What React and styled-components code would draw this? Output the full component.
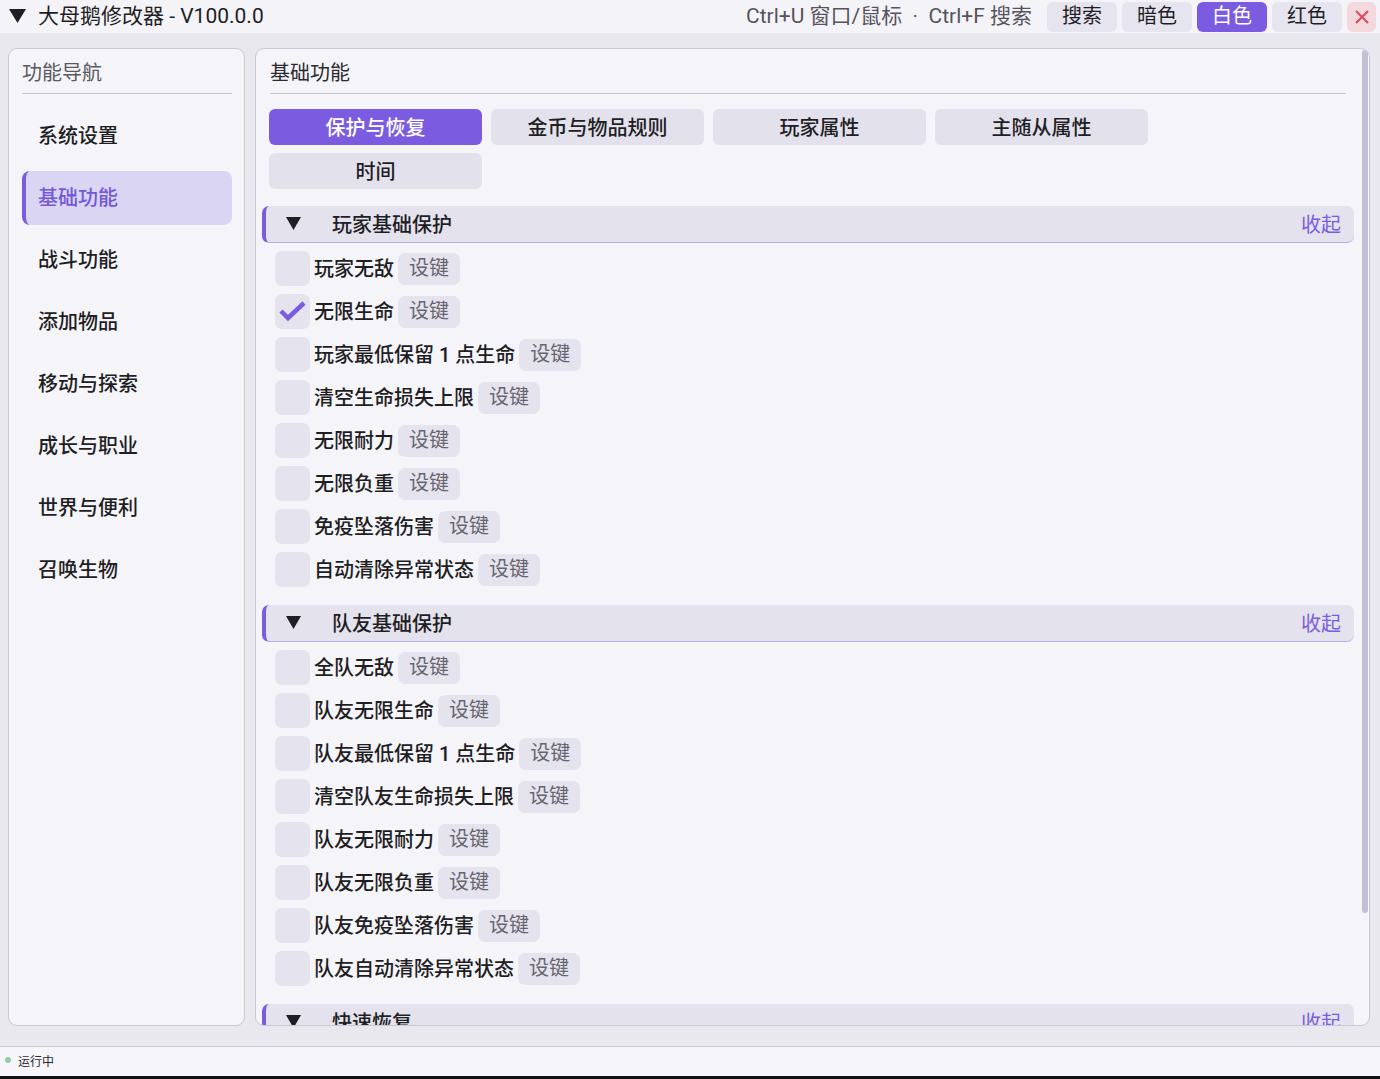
import styled, { createGlobalStyle } from 'styled-components';

const GlobalStyle = createGlobalStyle`
  html, body {
    margin: 0;
    padding: 0;
  }
  body {
    font-family: Roboto, "Noto Sans CJK SC", sans-serif;
    background: #000;
    color: #1e1e24;
  }
  * {
    box-sizing: border-box;
  }
`;

const PURPLE = '#7b5ce0';

const Shell = styled.div`
  height: 1079px;
  display: flex;
  flex-direction: column;
  background: #e9e8ef;
  overflow: hidden;
`;

const TopBar = styled.div`
  height: 33px;
  flex: none;
  display: flex;
  align-items: center;
  padding: 0 4px 0 9px;
  background: #f4f3f7;
`;

const AppTitle = styled.div`
  display: flex;
  align-items: center;
  gap: 12px;
  font-size: 21px;
  line-height: 30px;
  padding-bottom: 2px;
  color: #1e1e24;
`;

const Hint = styled.div`
  margin-left: auto;
  margin-right: 15px;
  font-size: 21px;
  line-height: 30px;
  padding-bottom: 2px;
  color: #55545c;
  white-space: pre;
`;

const BarButtons = styled.div`
  display: flex;
  gap: 5px;
`;

const BarButton = styled.button`
  height: 30px;
  padding: 0 15px 2px;
  border: none;
  border-radius: 6px;
  font-family: inherit;
  font-size: 20px;
  line-height: 28px;
  background: ${p => (p.$active ? PURPLE : '#e6e4ee')};
  color: ${p => (p.$active ? '#fff' : '#1e1e24')};
`;

const CloseButton = styled.button`
  width: 29px;
  height: 30px;
  padding: 0;
  border: none;
  border-radius: 6px;
  background: #f3d9de;
  display: flex;
  align-items: center;
  justify-content: center;
`;

const Main = styled.div`
  flex: 1;
  min-height: 0;
  display: flex;
  gap: 10px;
  padding: 15px 10px 20px 8px;
`;

const Panel = styled.div`
  background: #f5f4f8;
  border: 1px solid #cac8d4;
  border-radius: 9px;
  overflow: hidden;
`;

const NavPanel = styled(Panel)`
  width: 237px;
  flex: none;
  padding: 0 12px 0 13px;
`;

const PanelTitle = styled.div`
  padding: 11px 0 7px;
  line-height: 26px;
  font-size: 20px;
  color: ${p => (p.$muted ? '#5a5962' : '#2a2a30')};
  border-bottom: 1px solid #c6c4d0;
`;

const NavList = styled.div`
  margin-top: 15px;
  display: flex;
  flex-direction: column;
  gap: 8px;
`;

const NavItem = styled.div`
  height: 54px;
  display: flex;
  align-items: center;
  padding-left: ${p => (p.$active ? '12px' : '16px')};
  padding-bottom: 3px;
  border-radius: 8px;
  font-size: 20px;
  font-weight: 500;
  color: ${p => (p.$active ? '#7458d8' : '#1e1e24')};
  background: ${p => (p.$active ? '#dbd5f4' : 'transparent')};
  border-left: ${p => (p.$active ? `4px solid ${PURPLE}` : 'none')};
`;

const ContentPanel = styled(Panel)`
  flex: 1;
  position: relative;
`;

const Scroll = styled.div`
  height: 100%;
  overflow: hidden;
  padding: 0 15px 0 6px;
`;

const ContentTitle = styled(PanelTitle)`
  margin: 0 8px 0 8px;
`;

const Tabs = styled.div`
  display: grid;
  grid-template-columns: repeat(4, 213px);
  gap: 8px 9px;
  margin: 15px 0 17px 7px;
`;

const Tab = styled.div`
  height: 36px;
  padding-bottom: 2px;
  border-radius: 6px;
  display: flex;
  align-items: center;
  justify-content: center;
  font-size: 20px;
  font-weight: 500;
  background: ${p => (p.$active ? PURPLE : '#e3e1ec')};
  color: ${p => (p.$active ? '#fff' : '#1e1e24')};
`;

const SectionHeader = styled.div`
  height: 37px;
  display: flex;
  align-items: center;
  padding: 0 13px 2px 20px;
  background: #e4e2ec;
  border-left: 4px solid ${PURPLE};
  border-bottom: 1px solid #bcaeea;
  border-radius: 7px;
  font-size: 20px;
  color: #1e1e24;
`;

const SectionName = styled.span`
  margin-left: 31px;
  font-weight: 500;
`;

const Collapse = styled.span`
  margin-left: auto;
  color: ${PURPLE};
`;

const Rows = styled.div`
  display: flex;
  flex-direction: column;
  gap: 8px;
  padding: 8px 0 18px 13px;
`;

const Row = styled.div`
  display: flex;
  align-items: center;
  gap: 4px;
`;

const Check = styled.div`
  width: 35px;
  height: 35px;
  flex: none;
  border-radius: 7px;
  background: #e5e3ed;
  display: flex;
  align-items: center;
  justify-content: center;
`;

const Label = styled.span`
  font-size: 20px;
  font-weight: 500;
  line-height: 32px;
  color: #1e1e24;
`;

const KeyButton = styled.div`
  height: 32px;
  padding: 0 11px 1px;
  border-radius: 7px;
  background: #e5e3ed;
  color: #66656e;
  font-size: 20px;
  line-height: 31px;
`;

const ScrollThumb = styled.div`
  position: absolute;
  top: 1px;
  right: 1px;
  width: 6px;
  height: 863px;
  border-radius: 3px;
  background: #c4c0d2;
`;

const StatusBar = styled.div`
  height: 30px;
  flex: none;
  display: flex;
  align-items: center;
  gap: 7px;
  padding: 0 0 3px 5px;
  background: #f6f5f9;
  border-top: 1px solid #cac8d4;
  font-size: 12px;
  color: #2a2a30;
`;

const Dot = styled.span`
  width: 6px;
  height: 6px;
  border-radius: 50%;
  background: #8fd0a8;
`;

const BottomEdge = styled.div`
  height: 3px;
  flex: none;
  background: #111;
`;

const Caret = ({ w = 16, h = 13 }) => (
  <svg width={w} height={h} viewBox="0 0 16 13" preserveAspectRatio="none">
    <polygon points="0,0 16,0 8,13" fill="#1e1e24" />
  </svg>
);

const Tick = () => (
  <svg width="35" height="35" viewBox="0 0 35 35">
    <path d="M6 17 L13 24 L29 9" fill="none" stroke={PURPLE} strokeWidth="4.5" strokeLinejoin="miter" />
  </svg>
);

const navItems = ['系统设置', '基础功能', '战斗功能', '添加物品', '移动与探索', '成长与职业', '世界与便利', '召唤生物'];
const tabs = ['保护与恢复', '金币与物品规则', '玩家属性', '主随从属性', '时间'];

const sections = [
  {
    name: '玩家基础保护',
    rows: [
      ['玩家无敌', false],
      ['无限生命', true],
      ['玩家最低保留 1 点生命', false],
      ['清空生命损失上限', false],
      ['无限耐力', false],
      ['无限负重', false],
      ['免疫坠落伤害', false],
      ['自动清除异常状态', false],
    ],
  },
  {
    name: '队友基础保护',
    rows: [
      ['全队无敌', false],
      ['队友无限生命', false],
      ['队友最低保留 1 点生命', false],
      ['清空队友生命损失上限', false],
      ['队友无限耐力', false],
      ['队友无限负重', false],
      ['队友免疫坠落伤害', false],
      ['队友自动清除异常状态', false],
    ],
  },
  {
    name: '快速恢复',
    rows: [
      ['立即恢复生命', false],
      ['立即恢复耐力', false],
    ],
  },
];

export default function App() {
  return (
    <Shell>
      <GlobalStyle />
      <TopBar>
        <AppTitle>
          <Caret w={17} h={14} />
          <span>大母鹅修改器 - V100.0.0</span>
        </AppTitle>
        <Hint>{'Ctrl+U 窗口/鼠标  ·  Ctrl+F 搜索'}</Hint>
        <BarButtons>
          <BarButton>搜索</BarButton>
          <BarButton>暗色</BarButton>
          <BarButton $active>白色</BarButton>
          <BarButton>红色</BarButton>
          <CloseButton>
            <svg width="16" height="16" viewBox="0 0 16 16">
              <path d="M2 2 L14 14 M14 2 L2 14" stroke="#d9485f" strokeWidth="2" />
            </svg>
          </CloseButton>
        </BarButtons>
      </TopBar>

      <Main>
        <NavPanel>
          <PanelTitle $muted>功能导航</PanelTitle>
          <NavList>
            {navItems.map(item => (
              <NavItem key={item} $active={item === '基础功能'}>
                {item}
              </NavItem>
            ))}
          </NavList>
        </NavPanel>

        <ContentPanel>
          <Scroll>
            <ContentTitle>基础功能</ContentTitle>
            <Tabs>
              {tabs.map((t, i) => (
                <Tab key={t} $active={i === 0}>
                  {t}
                </Tab>
              ))}
            </Tabs>
            {sections.map(section => (
              <div key={section.name}>
                <SectionHeader>
                  <Caret w={15} h={13} />
                  <SectionName>{section.name}</SectionName>
                  <Collapse>收起</Collapse>
                </SectionHeader>
                <Rows>
                  {section.rows.map(([label, checked]) => (
                    <Row key={label}>
                      <Check>{checked && <Tick />}</Check>
                      <Label>{label}</Label>
                      <KeyButton>设键</KeyButton>
                    </Row>
                  ))}
                </Rows>
              </div>
            ))}
          </Scroll>
          <ScrollThumb />
        </ContentPanel>
      </Main>

      <StatusBar>
        <Dot />
        运行中
      </StatusBar>
      <BottomEdge />
    </Shell>
  );
}
